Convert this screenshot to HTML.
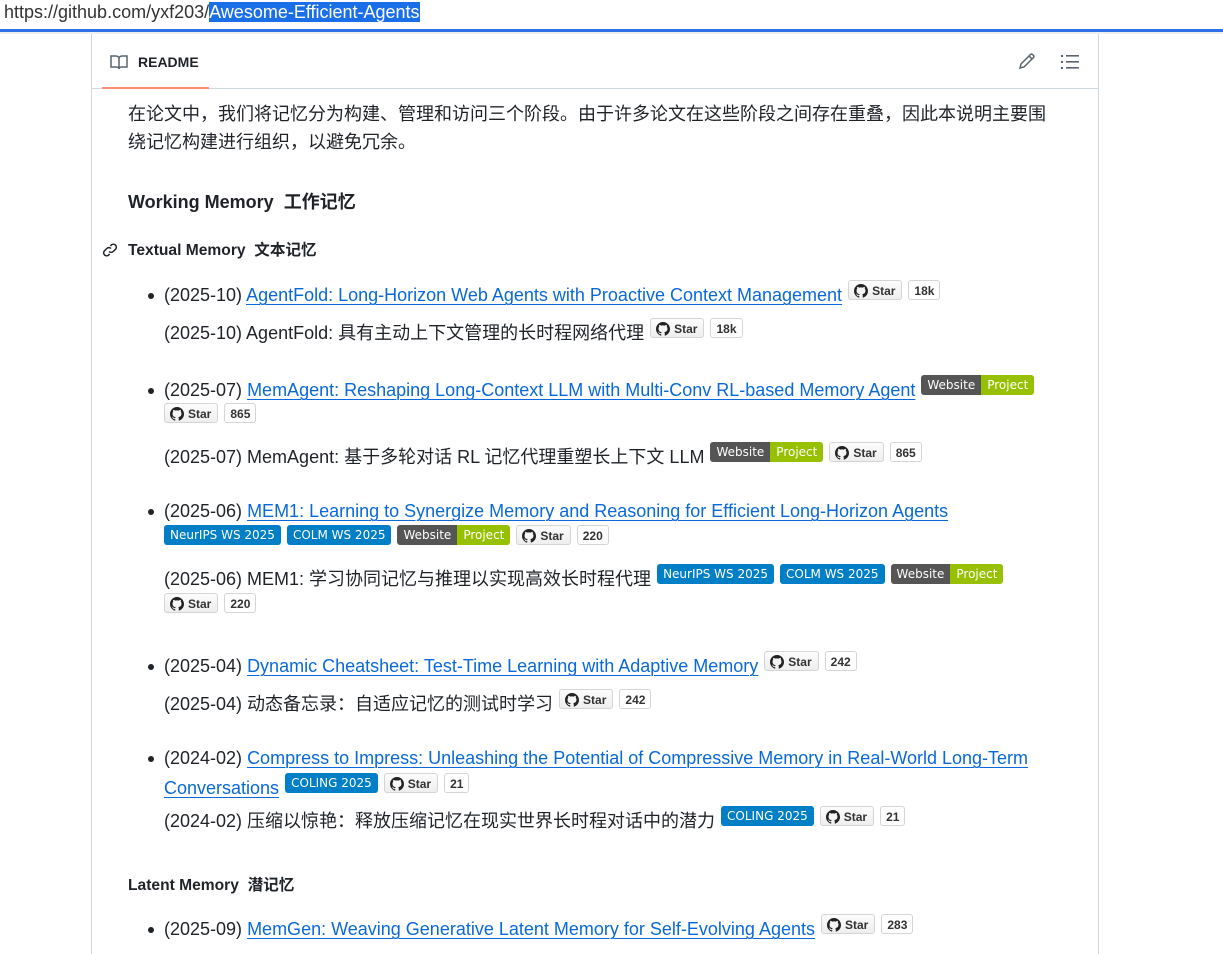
<!DOCTYPE html>
<html><head><meta charset="utf-8"><style>
*{margin:0;padding:0;box-sizing:border-box}
body{width:1223px;height:939px;overflow:hidden;background:#fff;font-family:"Liberation Sans","Noto Sans CJK SC",sans-serif;color:#1f2328;position:relative}
.url{position:absolute;left:4px;top:0;height:26px;font-size:18px;line-height:24px;color:#333;white-space:nowrap}
.url span{background:#1a6ee8;color:#fff}
.bar{position:absolute;left:0;top:29px;width:1223px;height:3px;background:#2f6fe4}
.bar2{position:absolute;left:0;top:32px;width:1223px;height:2px;background:#eef0f2}
.panel{position:absolute;left:91px;top:34px;width:1008px;height:920px;border-left:1px solid #d1d9e0;border-right:1px solid #d1d9e0}
.hdr{position:absolute;left:0;top:0;width:1006px;height:55px;border-bottom:1px solid #d1d9e0}
.tab{position:absolute;left:10px;top:0;height:55px;width:107px;border-bottom:2px solid #fd8c73}
.tab .t{position:absolute;left:36px;top:20px;font-size:14px;font-weight:bold}
.l{position:absolute;white-space:nowrap;font-size:18px;line-height:24px}
.a{color:#0969da;text-decoration:underline;text-underline-offset:3px;text-decoration-thickness:1px}
.b{display:inline-block;height:20px;vertical-align:top;position:relative;top:-3px;font-size:12px;line-height:20px;font-weight:bold;border-radius:3px;overflow:hidden;white-space:nowrap;margin-left:4px}
.blue{background:#007ec6;color:#fff;padding:0 6px;font-family:"DejaVu Sans",sans-serif;font-weight:normal;font-size:12px;margin-left:6px}
.ws{display:inline-flex;margin-left:6px}
.ws i{font-style:normal;background:#555;color:#fff;padding:0 6px;font-family:"DejaVu Sans",sans-serif;font-weight:normal;font-size:12px}
.ws i+i{background:#97c000}
.star{border:1px solid #d5d5d5;background:linear-gradient(#fcfcfc,#eee);color:#333;padding:0 6px 0 5px;margin-left:6px}
.star svg{vertical-align:-3px;margin-right:4px}
.cnt{border:1px solid #d5d5d5;background:#fff;color:#333;padding:0 5px;margin-left:6px;overflow:visible}
.dot{position:absolute;left:-16px;top:10px;width:6px;height:6px;border-radius:3px;background:#1f2328}
</style></head><body>
<div class="url">https://github.com/yxf203/<span>Awesome-Efficient-Agents</span></div>
<div class="bar"></div><div class="bar2"></div>
<div class="panel">
 <div class="hdr">
  <div class="tab"><svg style="position:absolute;left:8px;top:20px" width="18" height="16" viewBox="0 0 18 16" fill="none" stroke="#59636e" stroke-width="1.5"><path d="M1 2h5c1.5 0 3 1 3 2.5V15c0-1-1-2-2.5-2H1z M17 2h-5c-1.5 0-3 1-3 2.5V15c0-1 1-2 2.5-2H17z"/></svg><span class="t">README</span></div>
  <svg style="position:absolute;left:926px;top:18px" width="18" height="18" viewBox="0 0 18 18" fill="none" stroke="#59636e" stroke-width="1.5"><path d="M2 16l1-4L12.5 2.5a1.5 1.5 0 012 0l1 1a1.5 1.5 0 010 2L6 15z M11 4l3 3"/></svg>
  <svg style="position:absolute;left:969px;top:20px" width="18" height="16" viewBox="0 0 18 16" fill="#59636e"><rect x="0" y="1" width="2" height="2"/><rect x="0" y="7" width="2" height="2"/><rect x="0" y="13" width="2" height="2"/><rect x="5" y="1" width="13" height="1.6"/><rect x="5" y="7" width="13" height="1.6"/><rect x="5" y="13" width="13" height="1.6"/></svg>
 </div>
</div>
<div class="l" style="left:128px;top:102px">在论文中，我们将记忆分为构建、管理和访问三个阶段。由于许多论文在这些阶段之间存在重叠，因此本说明主要围</div>
<div class="l" style="left:128px;top:130px">绕记忆构建进行组织，以避免冗余。</div>
<div class="l" style="left:128px;top:190px;font-weight:bold;font-size:18px">Working Memory&nbsp; 工作记忆</div>
<svg style="position:absolute;left:102px;top:242px" width="16" height="16" viewBox="0 0 16 16" fill="none" stroke="#1f2328" stroke-width="1.5"><path d="M7 9.5a3 3 0 004.2 0l2.5-2.5a3 3 0 00-4.2-4.2L8.3 4 M9 6.5a3 3 0 00-4.2 0L2.3 9a3 3 0 004.2 4.2L7.7 12"/></svg>
<div class="l" style="left:128px;top:239px;font-weight:bold;font-size:15.6px">Textual Memory&nbsp; 文本记忆</div>

<div class="l" style="left:164px;top:283px"><i class="dot"></i>(2025-10) <span class="a">AgentFold: Long-Horizon Web Agents with Proactive Context Management</span><span class="b star">GH</span><span class="b cnt">18k</span></div>
<div class="l" style="left:164px;top:321px">(2025-10) AgentFold: 具有主动上下文管理的长时程网络代理<span class="b star">GH</span><span class="b cnt">18k</span></div>

<div class="l" style="left:164px;top:378px"><i class="dot"></i>(2025-07) <span class="a">MemAgent: Reshaping Long-Context LLM with Multi-Conv RL-based Memory Agent</span><span class="b ws"><i>Website</i><i>Project</i></span></div>
<div class="l" style="left:164px;top:406px"><span class="b star" style="margin-left:0">GH</span><span class="b cnt">865</span></div>
<div class="l" style="left:164px;top:445px">(2025-07) MemAgent: 基于多轮对话 RL 记忆代理重塑长上下文 LLM<span class="b ws"><i>Website</i><i>Project</i></span><span class="b star">GH</span><span class="b cnt">865</span></div>

<div class="l" style="left:164px;top:499px"><i class="dot"></i>(2025-06) <span class="a">MEM1: Learning to Synergize Memory and Reasoning for Efficient Long-Horizon Agents</span></div>
<div class="l" style="left:164px;top:528px"><span class="b blue" style="margin-left:0">NeurIPS WS 2025</span><span class="b blue">COLM WS 2025</span><span class="b ws"><i>Website</i><i>Project</i></span><span class="b star">GH</span><span class="b cnt">220</span></div>
<div class="l" style="left:164px;top:567px">(2025-06) MEM1: 学习协同记忆与推理以实现高效长时程代理<span class="b blue">NeurIPS WS 2025</span><span class="b blue">COLM WS 2025</span><span class="b ws"><i>Website</i><i>Project</i></span></div>
<div class="l" style="left:164px;top:596px"><span class="b star" style="margin-left:0">GH</span><span class="b cnt">220</span></div>

<div class="l" style="left:164px;top:654px"><i class="dot"></i>(2025-04) <span class="a">Dynamic Cheatsheet: Test-Time Learning with Adaptive Memory</span><span class="b star">GH</span><span class="b cnt">242</span></div>
<div class="l" style="left:164px;top:692px">(2025-04) 动态备忘录：自适应记忆的测试时学习<span class="b star">GH</span><span class="b cnt">242</span></div>

<div class="l" style="left:164px;top:746px"><i class="dot"></i>(2024-02) <span class="a">Compress to Impress: Unleashing the Potential of Compressive Memory in Real-World Long-Term</span></div>
<div class="l" style="left:164px;top:776px"><span class="a">Conversations</span><span class="b blue">COLING 2025</span><span class="b star">GH</span><span class="b cnt">21</span></div>
<div class="l" style="left:164px;top:809px">(2024-02) 压缩以惊艳：释放压缩记忆在现实世界长时程对话中的潜力<span class="b blue">COLING 2025</span><span class="b star">GH</span><span class="b cnt">21</span></div>

<div class="l" style="left:128px;top:874px;font-weight:bold;font-size:15.6px">Latent Memory&nbsp; 潜记忆</div>
<div class="l" style="left:164px;top:917px"><i class="dot"></i>(2025-09) <span class="a">MemGen: Weaving Generative Latent Memory for Self-Evolving Agents</span><span class="b star">GH</span><span class="b cnt">283</span></div>

<script>
var gh='<svg width="14" height="14" viewBox="0 0 16 16"><path fill="#222" d="M8 0C3.6 0 0 3.6 0 8c0 3.5 2.3 6.5 5.5 7.6.4.1.5-.2.5-.4v-1.4c-2.2.5-2.7-1-2.7-1-.4-.9-.9-1.200-.9-1.2-.7-.5.1-.5.1-.5.8.1 1.2.8 1.2.8.7 1.2 1.9.9 2.3.7.1-.5.3-.9.5-1.1-1.8-.2-3.6-.9-3.6-4 0-.9.3-1.6.8-2.1-.1-.2-.4-1 .1-2.1 0 0 .7-.2 2.2.8.6-.2 1.3-.3 2-.3s1.4.1 2 .3c1.5-1 2.2-.8 2.2-.8.4 1.1.2 1.9.1 2.1.5.6.8 1.3.8 2.1 0 3.1-1.9 3.7-3.6 3.9.3.3.5.8.5 1.500v2.2c0 .2.1.5.6.4C13.7 14.5 16 11.5 16 8c0-4.4-3.6-8-8-8z"/></svg>Star';
document.querySelectorAll('.star').forEach(function(e){e.innerHTML=gh});
</script>
</body></html>
